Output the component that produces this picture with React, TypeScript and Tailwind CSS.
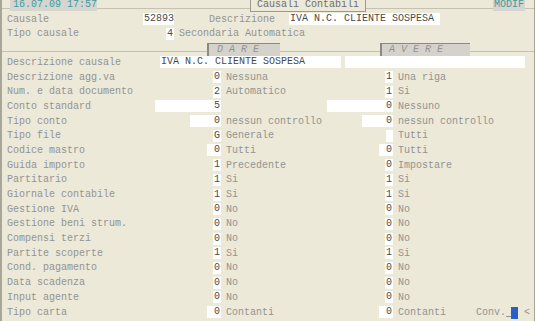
import React from "react";

type Row = {
  label: string;
  v1: string;
  w1: number;
  d1: string;
  v2: string;
  w2: number;
  d2: string;
};

const ROWS: Row[] = [
  { label: "Descrizione agg.va", v1: "0", w1: 8, d1: "Nessuna", v2: "1", w2: 8, d2: "Una riga" },
  { label: "Num. e data documento", v1: "2", w1: 8, d1: "Automatico", v2: "1", w2: 8, d2: "Si" },
  { label: "Conto standard", v1: "5", w1: 66, d1: "", v2: "0", w2: 66, d2: "Nessuno" },
  { label: "Tipo conto", v1: "0", w1: 31, d1: "nessun controllo", v2: "0", w2: 31, d2: "nessun controllo" },
  { label: "Tipo file", v1: "G", w1: 8, d1: "Generale", v2: "", w2: 7, d2: "Tutti" },
  { label: "Codice mastro", v1: "0", w1: 14, d1: "Tutti", v2: "0", w2: 14, d2: "Tutti" },
  { label: "Guida importo", v1: "1", w1: 8, d1: "Precedente", v2: "0", w2: 8, d2: "Impostare" },
  { label: "Partitario", v1: "1", w1: 8, d1: "Si", v2: "1", w2: 8, d2: "Si" },
  { label: "Giornale contabile", v1: "1", w1: 8, d1: "Si", v2: "1", w2: 8, d2: "Si" },
  { label: "Gestione IVA", v1: "0", w1: 8, d1: "No", v2: "0", w2: 8, d2: "No" },
  { label: "Gestione beni strum.", v1: "0", w1: 8, d1: "No", v2: "0", w2: 8, d2: "No" },
  { label: "Compensi terzi", v1: "0", w1: 8, d1: "No", v2: "0", w2: 8, d2: "No" },
  { label: "Partite scoperte", v1: "1", w1: 8, d1: "Si", v2: "1", w2: 8, d2: "Si" },
  { label: "Cond. pagamento", v1: "0", w1: 8, d1: "No", v2: "0", w2: 8, d2: "No" },
  { label: "Data scadenza", v1: "0", w1: 8, d1: "No", v2: "0", w2: 8, d2: "No" },
  { label: "Input agente", v1: "0", w1: 8, d1: "No", v2: "0", w2: 8, d2: "No" },
  { label: "Tipo carta", v1: "0", w1: 14, d1: "Contanti", v2: "0", w2: 14, d2: "Contanti" },
];

const Field: React.FC<{ value: string; width: number; left?: boolean }> = ({ value, width, left }) => (
  <div
    className={`h-[12px] bg-white px-[1px] leading-[12px] text-[#4a4a4a] whitespace-pre overflow-hidden ${left ? "text-left" : "text-right"}`}
    style={{ width }}
  >
    {value}
  </div>
);

const App: React.FC = () => {
  return (
    <div
      className="w-[535px] h-[321px] bg-[#ECE9D8] border-l-2 border-r border-[#A8A698] overflow-hidden text-[10px] text-[#939393] whitespace-pre"
      style={{ fontFamily: '"Liberation Mono", "Courier New", monospace' }}
    >
      {/* Header strip */}
      <div className="flex items-start h-[12px]">
        <div className="w-[8px] h-[9px] border-b border-[#C4C1B2]" />
        <div className="w-[87px] h-[11px] bg-[#D6D5CF] pl-[3px] leading-[10px] text-[#3f9c9c]">16.07.09 17:57</div>
        <div className="w-[153px] h-[9px] border-b border-[#C4C1B2]" />
        <div className="w-[116px] h-[12px] border-l border-r border-b border-[#9a9a90] text-center leading-[10px] text-[#6e6e6e]">
          Causali Contabili
        </div>
        <div className="flex-1 h-[9px] border-b border-[#C4C1B2]" />
        <div className="w-[32px] h-[11px] bg-[#D6D5CF] text-center leading-[10px] text-[#3f9c9c]">MODIF</div>
        <div className="w-[9px] h-[9px] border-b border-[#C4C1B2]" />
      </div>

      {/* Causale */}
      <div className="flex items-center h-[14px] pl-[5px]">
        <div className="w-[136px]">Causale</div>
        <Field value="52893" width={31} />
        <div className="w-[115px] pl-[35px]">Descrizione</div>
        <Field value="IVA N.C. CLIENTE SOSPESA" width={151} left />
      </div>

      {/* Tipo causale */}
      <div className="flex items-center h-[15px] pl-[5px]">
        <div className="w-[159px]">Tipo causale</div>
        <Field value="4" width={8} />
        <div className="pl-[5px]">Secondaria Automatica</div>
      </div>

      {/* DARE / AVERE */}
      <div className="flex items-start h-[14px]">
        <div className="w-[205px] h-[11px] border-b border-[#C4C1B2]" />
        <div className="mt-[2px] w-[73px] h-[13px] bg-[#D4D2CA] border-l-2 border-t border-[#8a8a84] pl-[8px] leading-[12px] italic">
          D A R E
        </div>
        <div className="w-[100px] h-[11px] border-b border-[#C4C1B2]" />
        <div className="mt-[2px] w-[90px] h-[13px] bg-[#D4D2CA] border-l-2 border-t border-[#8a8a84] pl-[7px] leading-[12px] italic">
          A V E R E
        </div>
        <div className="flex-1 h-[11px] border-b border-[#C4C1B2]" />
      </div>

      {/* Descrizione causale */}
      <div className="flex items-center h-[14.7px] pl-[5px]">
        <div className="w-[153px]">Descrizione causale</div>
        <Field value="IVA N.C. CLIENTE SOSPESA" width={181} left />
        <div className="w-[4px]" />
        <Field value="" width={180} left />
      </div>

      {ROWS.map((r, i) => (
        <div key={r.label} className="flex items-center h-[14.7px] pl-[5px]">
          <div className="w-[214px] flex justify-between items-center">
            <span>{r.label}</span>
            <Field value={r.v1} width={r.w1} />
          </div>
          <div className="w-[172px] flex justify-between items-center">
            <span className="pl-[5px]">{r.d1}</span>
            <Field value={r.v2} width={r.w2} />
          </div>
          <div className="flex-1 flex items-center">
            <span className="pl-[5px] w-[83px]">{r.d2}</span>
            {i === ROWS.length - 1 && (
              <div className="flex items-end h-[14px]">
                <span className="self-center">Conv.</span>
                <span className="w-[5px] h-[1px] bg-[#939393] mb-[2px]" />
                <span className="w-[7px] h-[12px] bg-[#2a5fc8] mt-[2px]" />
                <span className="self-center pl-[6px]">&lt;</span>
              </div>
            )}
          </div>
        </div>
      ))}
    </div>
  );
};

export default App;
